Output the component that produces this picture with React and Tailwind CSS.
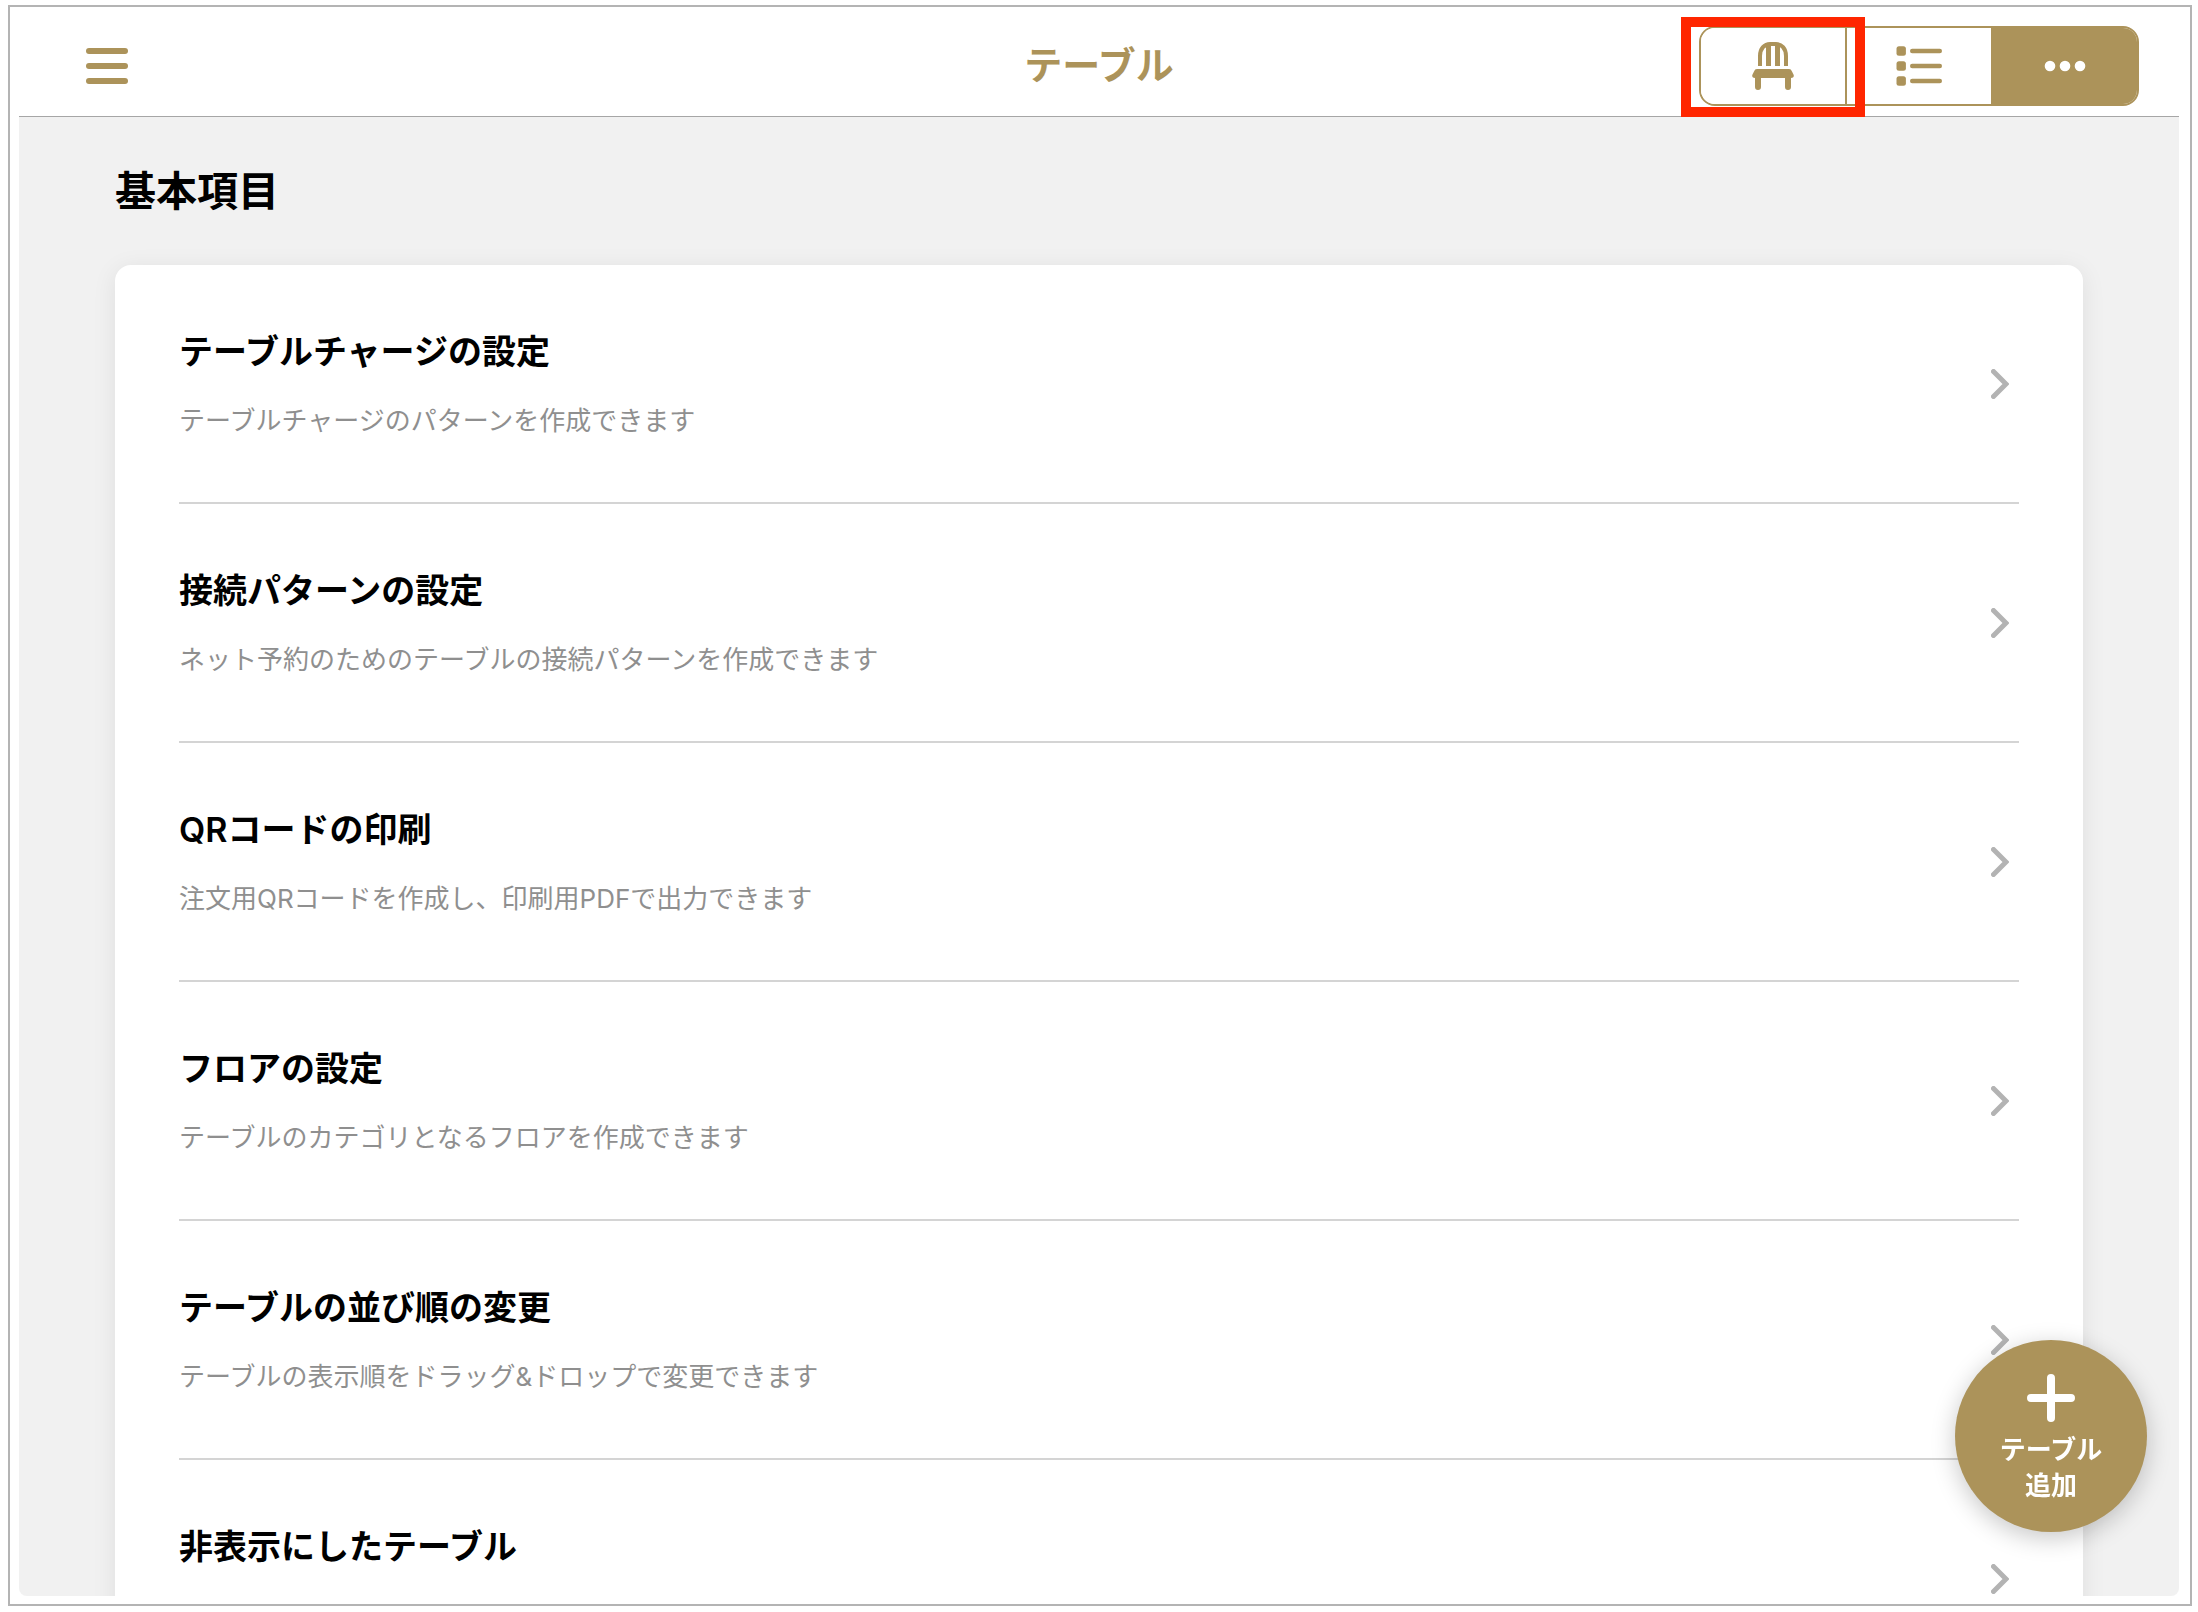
import { useState } from 'react'

const items = [
  { title: 'テーブルチャージの設定', description: 'テーブルチャージのパターンを作成できます' },
  { title: '接続パターンの設定', description: 'ネット予約のためのテーブルの接続パターンを作成できます' },
  { title: 'QRコードの印刷', description: '注文用QRコードを作成し、印刷用PDFで出力できます' },
  { title: 'フロアの設定', description: 'テーブルのカテゴリとなるフロアを作成できます' },
  { title: 'テーブルの並び順の変更', description: 'テーブルの表示順をドラッグ&ドロップで変更できます' },
  { title: '非表示にしたテーブル' },
]

function ChairIcon() {
  return (
    <svg width="42" height="48" viewBox="0 0 42 48" fill="none" stroke="currentColor">
      <path d="M8 24V14C8 6.500 12.500 2 18 2H24C29.500 2 34 6.500 34 14V24" strokeWidth="4" />
      <path d="M16.500 3V24M25.500 3V24" strokeWidth="5" />
      <path d="M5 27H37C38.500 27 39.200 27.800 40 29.500L41.500 32.500C42.500 34.500 41 36 39 36H3C1 36 -0.500 34.500 0.500 32.500L2 29.500C2.800 27.800 3.500 27 5 27Z" fill="currentColor" stroke="none" />
      <path d="M6 34V45M36 34V45" strokeWidth="6" strokeLinecap="round" />
    </svg>
  )
}

function ListIcon() {
  return (
    <svg width="46" height="40" viewBox="0 0 46 40" fill="currentColor">
      {[0, 15, 30].map((y) => (
        <g key={y}>
          <rect x="0.500" y={y + 0.3} width="9.400" height="9.400" rx="2.500" />
          <rect x="14" y={y + 2.8} width="32" height="4.400" rx="2.200" />
        </g>
      ))}
    </svg>
  )
}

function DotsIcon() {
  return (
    <svg width="42" height="12" viewBox="0 0 42 12" fill="currentColor">
      <circle cx="6" cy="6" r="5.300" />
      <circle cx="21" cy="6" r="5.300" />
      <circle cx="36" cy="6" r="5.300" />
    </svg>
  )
}

const tabs = [
  { id: 'floor', label: 'フロア表示', Icon: ChairIcon },
  { id: 'list', label: 'リスト表示', Icon: ListIcon },
  { id: 'more', label: 'その他', Icon: DotsIcon },
]

export default function App() {
  const [active, setActive] = useState('more')

  return (
    <div className="h-screen bg-white pt-[5px] pr-[6px] pb-[6px] pl-[8px] font-['Inter','Noto_Sans_CJK_JP',sans-serif] text-black">
      <div className="flex h-full flex-col border-2 border-[#b4b4b4] pr-[11px] pb-2 pl-[9px]">
        {/* Header */}
        <header className="grid h-[110px] shrink-0 grid-cols-[1fr_auto_1fr] items-center border-b border-[#a6a6a6] px-10 pt-[9px]">
          <button type="button" aria-label="メニュー" className="ml-[27px] flex w-[42px] flex-col gap-[9px]">
            <span className="h-[6px] rounded-full bg-[#ac935a]" />
            <span className="h-[6px] rounded-full bg-[#ac935a]" />
            <span className="h-[6px] rounded-full bg-[#ac935a]" />
          </button>

          <h1 className="pb-[2px] text-[38px] leading-10 font-semibold text-[#ac935a]">テーブル</h1>

          <div className="relative justify-self-end">
            <div className="flex h-20 divide-x-2 divide-[#ac935a] overflow-hidden rounded-2xl border-2 border-[#ac935a]">
              {tabs.map(({ id, label, Icon }) => (
                <button
                  key={id}
                  type="button"
                  aria-label={label}
                  aria-pressed={active === id}
                  onClick={() => setActive(id)}
                  className={`box-content flex w-36 items-center justify-center ${
                    active === id ? 'bg-[#ac935a] text-white' : 'bg-white text-[#ac935a]'
                  }`}
                >
                  <Icon />
                </button>
              ))}
            </div>
            {/* Highlight around the first tab */}
            <div className="pointer-events-none absolute -top-[9px] -left-[18px] z-10 h-[100px] w-[184px] border-10 border-[#ff2600]" />
          </div>
        </header>

        {/* Body */}
        <div className="relative min-h-0 flex-1">
          <main className="h-full overflow-y-auto rounded-b-lg bg-[#f1f1f1] px-24 [scrollbar-width:none]">
            <h2 className="pt-12 text-[41px] leading-[52px] font-semibold">基本項目</h2>

            <ul className="mt-12 rounded-2xl bg-white px-16 shadow-[0_4px_24px_rgba(0,0,0,0.08)]">
              {items.map((item) => (
                <li key={item.title} className="border-b-2 border-[#d4d4d4] last:border-b-0">
                  <a href="#" className="flex min-h-[237px] items-center justify-between pr-[10px]">
                    <div className="self-start pt-16">
                      <h3 className="text-[34px] leading-[46px] font-semibold">{item.title}</h3>
                      {item.description && (
                        <p className="mt-7 text-[26px] leading-9 text-[#8f8f8f]">{item.description}</p>
                      )}
                    </div>
                    <svg width="18" height="30" viewBox="0 0 18 30" fill="none" stroke="#b3b3b3" strokeWidth="5" strokeLinecap="round">
                      <path d="M2.500 2.500L15 15L2.500 27.500" />
                    </svg>
                  </a>
                </li>
              ))}
            </ul>
          </main>

          {/* Add table */}
          <button
            type="button"
            className="absolute right-8 bottom-16 flex size-48 flex-col items-center rounded-full bg-[#ac935a] pt-[34px] text-white shadow-[0_6px_24px_rgba(0,0,0,0.22)]"
          >
            <svg width="48" height="48" viewBox="0 0 48 48" stroke="currentColor" strokeWidth="8" strokeLinecap="round">
              <path d="M24 4V44M4 24H44" />
            </svg>
            <span className="mt-[10px] text-[26px] leading-9 font-semibold">
              テーブル
              <br />
              追加
            </span>
          </button>
        </div>
      </div>
    </div>
  )
}
